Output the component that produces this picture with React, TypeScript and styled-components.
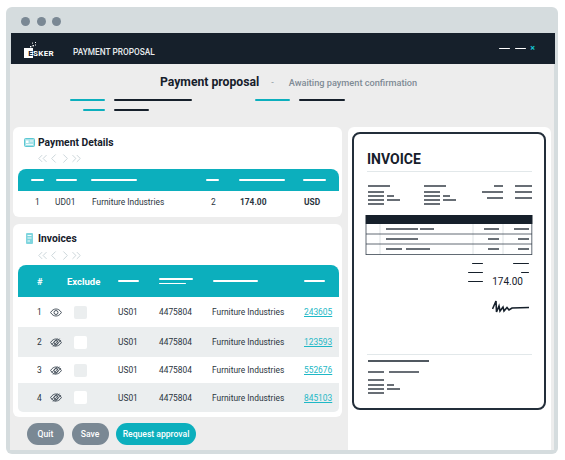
import React from 'react'
import styled, { createGlobalStyle } from 'styled-components'
import { ChevronLeft, ChevronRight, ChevronsLeft, ChevronsRight } from 'lucide-react'

const GlobalStyle = createGlobalStyle`
  html, body {
    margin: 0;
    padding: 0;
    background: #fff;
  }
  * {
    box-sizing: border-box;
  }
`

const DARK = '#16202b'
const CYAN = '#0cafbd'

const Page = styled.div`
  width: 565px;
  height: 460px;
  padding: 7px 0 0 6px;
  font-family: Roboto, 'Liberation Sans', sans-serif;
  color: ${DARK};
  overflow: hidden;
`

const Window = styled.div`
  width: 552px;
  height: 447px;
  display: flex;
  flex-direction: column;
  padding: 0 4px 4px;
  background: #d5dcde;
  border-radius: 6px;
`

const TitleBar = styled.div`
  height: 26px;
  flex: none;
  display: flex;
  align-items: center;
  gap: 6.5px;
  padding: 2px 0 0 11px;
`

const Dot = styled.span`
  width: 9px;
  height: 9px;
  border-radius: 50%;
  background: #7a8894;
`

const AppHeader = styled.header`
  height: 31px;
  flex: none;
  margin: 0 -1px 0 1px;
  display: flex;
  align-items: center;
  background: ${DARK};
  color: #e8ecee;
  padding: 0 20px 0 13px;
`

const Logo = styled.div`
  position: relative;
  display: flex;
  align-items: flex-end;
  width: 31px;
  height: 10px;
  margin-top: 8px;
  font-size: 8px;
  line-height: 8px;
  letter-spacing: 0.35px;
  font-weight: 700;
  color: #fff;
`

const LogoBlock = styled.span`
  width: 9px;
  height: 10px;
  background: #fff;
  color: ${DARK};
  text-align: right;
  padding-top: 2px;
`

const LogoDots = styled.svg`
  position: absolute;
  left: 5px;
  top: -6px;
`

const AppName = styled.span`
  margin-left: 18px;
  margin-top: 6px;
  font-size: 8.3px;
  font-weight: 500;
`

const WindowControls = styled.div`
  margin-left: auto;
  margin-top: 0;
  display: flex;
  align-items: center;
  gap: 5px;
`

const CloseMark = styled.span`
  color: #14c2d0;
  font-size: 9px;
  line-height: 7px;
  font-weight: 700;
  margin-left: -1px;
`

const Bar = styled.span<{ $w: number; $color?: string; $h?: number }>`
  display: block;
  flex: none;
  width: ${(p) => p.$w}px;
  height: ${(p) => p.$h ?? 1.5}px;
  background: ${(p) => p.$color ?? DARK};
  border-radius: 1px;
`

const Main = styled.main`
  flex: 1;
  min-height: 0;
  display: flex;
  flex-direction: column;
  background: #ededed;
  padding: 0 3px;
`

const Heading = styled.div`
  display: flex;
  align-items: center;
  height: 18px;
  margin-top: 9px;
  padding-left: 147px;
`

const HeadingTitle = styled.h1`
  margin: 0;
  font-size: 12.2px;
  font-weight: 700;
  white-space: nowrap;
`

const HeadingDash = styled.span`
  margin-left: 12px;
  font-size: 9px;
  color: #8b97a1;
`

const HeadingStatus = styled.span`
  margin-left: 15px;
  font-size: 9.2px;
  font-weight: 500;
  color: #7f8b95;
  white-space: nowrap;
`

const StepBars = styled.div`
  display: flex;
  margin-top: 8px;
  padding-left: 57px;
  gap: 63px;
`

const StepGroup = styled.div`
  display: flex;
  flex-direction: column;
  gap: 8.5px;
`

const StepRow = styled.div<{ $indent?: number }>`
  display: flex;
  gap: 9px;
  margin-left: ${(p) => p.$indent ?? 0}px;
`

const Columns = styled.div`
  display: grid;
  grid-template-columns: 329px 203px;
  column-gap: 6px;
  margin-top: 16.5px;
  flex: 1;
  min-height: 0;
`

const LeftColumn = styled.div`
  display: flex;
  flex-direction: column;
  gap: 7px;
`

const Card = styled.section<{ $top: number }>`
  background: #fff;
  border-radius: 6px;
  padding: ${(p) => p.$top}px 3px 5px 5px;
`

const CardTitle = styled.h2`
  margin: 0;
  height: 14px;
  display: flex;
  align-items: center;
  gap: 3px;
  font-size: 10.3px;
  font-weight: 700;
  white-space: nowrap;
`

const TitleIcon = styled.svg<{ $left: number }>`
  margin-left: ${(p) => p.$left}px;
`

const InvoicesLabel = styled.span`
  margin-left: 2px;
`

const Pager = styled.div<{ $top: number; $bottom: number }>`
  display: flex;
  align-items: center;
  height: 12px;
  gap: 0;
  margin: ${(p) => p.$top}px 0 ${(p) => p.$bottom}px 16.5px;
  color: #c9d3d7;

  & > svg {
    flex: none;
    margin-right: -3.5px;
  }
`

const Row = styled.div<{
  $cols: string
  $h: number
  $striped?: boolean
  $head?: boolean
  $last?: boolean
}>`
  display: grid;
  grid-template-columns: ${(p) => p.$cols};
  align-items: center;
  height: ${(p) => p.$h}px;
  font-size: 8.4px;
  background: ${(p) => (p.$head ? CYAN : p.$striped ? '#ebeeef' : '#fff')};
  color: ${(p) => (p.$head ? '#fff' : '#2a3540')};
  border-radius: ${(p) => (p.$head ? '8px 8px 0 0' : p.$last ? '0 0 5px 5px' : '0')};
`

const Cell = styled.div<{ $bold?: boolean; $center?: boolean; $indent?: number }>`
  font-weight: ${(p) => (p.$bold ? 700 : 400)};
  text-align: ${(p) => (p.$center ? 'center' : 'left')};
  margin-left: ${(p) => p.$indent ?? 0}px;
  white-space: nowrap;
`

const HeadLabel = styled.div<{ $indent?: number; $span?: number }>`
  font-size: 9.5px;
  font-weight: 700;
  margin-left: ${(p) => p.$indent ?? 0}px;
  grid-column: span ${(p) => p.$span ?? 1};
  white-space: nowrap;
`

const HeadBar = styled(Bar)<{ $indent?: number }>`
  background: #fff;
  height: 1.5px;
  margin-left: ${(p) => p.$indent ?? 0}px;
`

const StackedBars = styled.div`
  display: flex;
  flex-direction: column;
  gap: 3px;
`

const Check = styled.span<{ $striped?: boolean }>`
  display: block;
  width: 13px;
  height: 13px;
  border-radius: 2px;
  background: ${(p) => (p.$striped ? '#fff' : '#ebeeef')};
`

const InvoiceLink = styled.a`
  color: #1eb8c6;
  text-decoration: underline;
`

const Actions = styled.div`
  display: flex;
  gap: 7.5px;
  margin-top: -1px;
  padding-left: 14px;
`

const ActionButton = styled.button<{ $primary?: boolean; $w: number }>`
  width: ${(p) => p.$w}px;
  height: 22px;
  padding: 0;
  border: 0;
  border-radius: 11px;
  font-family: inherit;
  font-size: 8.6px;
  font-weight: 500;
  color: #fff;
  background: ${(p) => (p.$primary ? CYAN : '#7a8894')};
`

const PreviewPanel = styled.aside`
  background: #fff;
  border-radius: 6px 6px 0 0;
  padding: 5px 5px 0 4px;
  height: 323px;
`

const Paper = styled.div`
  width: 194px;
  height: 278px;
  display: flex;
  flex-direction: column;
  border: 2px solid #232e3a;
  border-radius: 8px;
  padding: 16px 12px 14px 13px;
`

const PaperTitle = styled.h3`
  margin: 0;
  height: 18px;
  line-height: 18px;
  font-size: 14px;
  font-weight: 700;
`

const PaperRule = styled.hr`
  width: 165px;
  flex: none;
  height: 1px;
  margin: 2.5px 0 0;
  border: 0;
  background: #e2e8ea;
`

const PaperLines = styled.svg`
  display: block;
  flex: none;
  margin-left: -2px;
`

const TotalRow = styled.div`
  display: grid;
  grid-template-columns: 116px 46px;
  height: 9.3px;
  align-items: center;
  justify-items: end;
`

const TotalsBlock = styled.div`
  margin-top: 3px;
`

const TotalValue = styled.span`
  font-size: 10px;
  line-height: 9px;
  margin-right: 6px;
`

const Signature = styled.svg`
  display: block;
  align-self: flex-end;
  margin: 14px 3px 0 0;
`

const PaperFooter = styled.div`
  margin-top: auto;
`

type LineSpec = [number, number, number]

// x1, x2, y in page pixels, shifted by the svg viewBox
const topLines: LineSpec[] = [
  [368, 390, 186], [368, 384, 192], [368, 384, 196], [387, 394, 196], [368, 384, 200], [387, 400, 200], [368, 384, 204],
  [424, 446, 186], [424, 440, 192], [424, 440, 196], [443, 450, 196], [424, 440, 200], [443, 456, 200], [424, 440, 204],
  [494, 503, 186], [482, 503, 192], [487, 503, 198],
  [515, 532, 186], [515, 532, 192], [515, 532, 198],
  [386, 418, 229], [420, 434, 229], [484, 499, 229], [514, 529, 229],
  [386, 418, 239], [488, 499, 239], [518, 529, 239],
  [386, 402, 249], [406, 430, 249], [488, 499, 249], [518, 529, 249],
]

const footerLines: LineSpec[] = [
  [368, 429, 362], [368, 384, 373], [389, 419, 373], [368, 384, 381],
  [368, 384, 386], [387, 394, 386], [368, 384, 390], [387, 400, 390], [368, 384, 394],
]

const drawLines = (lines: LineSpec[]) =>
  lines.map(([x1, x2, y]) => (
    <line key={`${x1}-${x2}-${y}`} x1={x1} x2={x2} y1={y} y2={y} stroke={DARK} strokeWidth="1.3" />
  ))

const EyeIcon = ({ off }: { off?: boolean }) => (
  <svg width="12" height="9" viewBox="0 0 12 9" fill="none" stroke="#3a4550" strokeWidth="0.9">
    <path d="M0.6 4.5C2.2 1.9 4 1 6 1s3.8 0.9 5.4 3.5C9.8 7.1 8 8 6 8S2.2 7.1 0.6 4.5Z" />
    <circle cx="6" cy="4.5" r="2" />
    {off && <path d="M3 8.6L9.6 0.6M5 8.6L11 2M1.6 6.6L7.6 0.6" strokeWidth="0.8" />}
  </svg>
)

const Pagination = ({ top, bottom }: { top: number; bottom: number }) => (
  <Pager $top={top} $bottom={bottom}>
    <ChevronsLeft size={15} strokeWidth={1.5} />
    <ChevronLeft size={15} strokeWidth={1.5} />
    <ChevronRight size={15} strokeWidth={1.5} />
    <ChevronsRight size={15} strokeWidth={1.5} />
  </Pager>
)

const detailCols = '38px 35px 115px 33px 64px 36px'
const invoiceCols = '32px 24px 44px 41px 53px 92px 35px'

const invoices = [
  { id: 1, link: '243605', h: 30 },
  { id: 2, link: '123593', h: 30 },
  { id: 3, link: '552676', h: 26 },
  { id: 4, link: '845103', h: 29 },
]

const App = () => {
  return (
    <Page>
      <GlobalStyle />
      <Window>
        <TitleBar>
          <Dot />
          <Dot />
          <Dot />
        </TitleBar>
        <AppHeader>
          <Logo>
            <LogoDots width="8" height="6" viewBox="0 0 8 6" fill="#fff">
              <rect x="1" y="4" width="1.4" height="1.4" />
              <rect x="3.5" y="3" width="1.4" height="1.4" />
              <rect x="3" y="0.6" width="1" height="1" />
              <rect x="6" y="0" width="1" height="1" />
              <rect x="6" y="2.5" width="1" height="1" />
            </LogoDots>
            <LogoBlock>E</LogoBlock>
            SKER
          </Logo>
          <AppName>PAYMENT PROPOSAL</AppName>
          <WindowControls>
            <Bar $w={11} $color="#fff" $h={1} />
            <Bar $w={11} $color="#fff" $h={1} />
            <CloseMark>×</CloseMark>
          </WindowControls>
        </AppHeader>
        <Main>
          <Heading>
            <HeadingTitle>Payment proposal</HeadingTitle>
            <HeadingDash>-</HeadingDash>
            <HeadingStatus>Awaiting payment confirmation</HeadingStatus>
          </Heading>
          <StepBars>
            <StepGroup>
              <StepRow>
                <Bar $w={35} $color={CYAN} />
                <Bar $w={78} />
              </StepRow>
              <StepRow $indent={13}>
                <Bar $w={22} $color={CYAN} />
                <Bar $w={35} />
              </StepRow>
            </StepGroup>
            <StepGroup>
              <StepRow>
                <Bar $w={35} $color={CYAN} />
                <Bar $w={46} />
              </StepRow>
            </StepGroup>
          </StepBars>
          <Columns>
            <LeftColumn>
              <Card $top={8}>
                <CardTitle>
                  <TitleIcon $left={6} width="11" height="9" viewBox="0 0 11 9">
                    <rect x="0.5" y="0.5" width="10" height="8" rx="1" fill="#a8e2e8" stroke="#5cc8d3" />
                    <rect x="2" y="2.5" width="2.5" height="2.5" fill="#fff" />
                    <path d="M6 3h3M2 6.5h7" stroke="#fff" strokeWidth="0.8" />
                  </TitleIcon>
                  Payment Details
                </CardTitle>
                <Pagination top={3} bottom={5} />
                <Row $cols={detailCols} $h={22} $head>
                  <HeadBar $w={13} $indent={13} />
                  <HeadBar $w={21} />
                  <HeadBar $w={46} />
                  <HeadBar $w={13} />
                  <HeadBar $w={46} />
                  <HeadBar $w={23} />
                </Row>
                <Row $cols={detailCols} $h={21}>
                  <Cell $indent={17}>1</Cell>
                  <Cell $indent={-1}>UD01</Cell>
                  <Cell $indent={1}>Furniture Industries</Cell>
                  <Cell $indent={5}>2</Cell>
                  <Cell $bold $indent={1}>174.00</Cell>
                  <Cell $bold $indent={1}>USD</Cell>
                </Row>
              </Card>
              <Card $top={7}>
                <CardTitle>
                  <TitleIcon $left={8} width="7" height="11" viewBox="0 0 7 11">
                    <rect x="0" y="0" width="7" height="11" rx="1" fill="#7fd5de" />
                    <path d="M1.5 2.5h4M1.5 5h4M1.5 8h2.5" stroke="#fff" strokeWidth="0.9" />
                  </TitleIcon>
                  <InvoicesLabel>Invoices</InvoicesLabel>
                </CardTitle>
                <Pagination top={4} bottom={4} />
                <Row $cols={invoiceCols} $h={32} $head>
                  <HeadLabel $indent={19}>#</HeadLabel>
                  <HeadLabel $indent={17} $span={2}>Exclude</HeadLabel>
                  <HeadBar $w={21} />
                  <StackedBars>
                    <HeadBar $w={34} />
                    <HeadBar $w={27} />
                  </StackedBars>
                  <HeadBar $w={45} $indent={1} />
                  <HeadBar $w={21} />
                </Row>
                {invoices.map((inv) => {
                  const striped = inv.id % 2 === 0
                  return (
                    <Row key={inv.id} $cols={invoiceCols} $h={inv.h} $striped={striped} $last={inv.id === 4}>
                      <Cell $indent={19}>{inv.id}</Cell>
                      <EyeIcon off={inv.id > 1} />
                      <Check $striped={striped} />
                      <Cell>US01</Cell>
                      <Cell>4475804</Cell>
                      <Cell>Furniture Industries</Cell>
                      <Cell>
                        <InvoiceLink href="#">{inv.link}</InvoiceLink>
                      </Cell>
                    </Row>
                  )
                })}
              </Card>
              <Actions>
                <ActionButton $w={37}>Quit</ActionButton>
                <ActionButton $w={37}>Save</ActionButton>
                <ActionButton $w={80} $primary>Request approval</ActionButton>
              </Actions>
            </LeftColumn>
            <PreviewPanel>
              <Paper>
                <PaperTitle>INVOICE</PaperTitle>
                <PaperRule />
                <PaperLines width="169" height="84" viewBox="365 172 169 84">
                  {drawLines(topLines)}
                  <rect x="365.5" y="215" width="167" height="9" fill={DARK} />
                  <path d="M380 224V254.5M473 224V254.5M503 224V254.5" stroke="#d5dcde" strokeWidth="0.8" />
                  <path
                    d="M366 224V255M531.8 224V255M366 234H532M366 244H532M366 254.5H532"
                    stroke="#3a4550"
                    strokeWidth="0.8"
                    fill="none"
                  />
                </PaperLines>
                <TotalsBlock>
                  <TotalRow>
                    <Bar $w={11} $h={1.3} />
                    <Bar $w={16} $h={1.3} />
                  </TotalRow>
                  <TotalRow>
                    <Bar $w={15} $h={1.3} />
                    <Bar $w={8} $h={1.3} />
                  </TotalRow>
                  <TotalRow>
                    <Bar $w={15} $h={1.3} />
                    <TotalValue>174.00</TotalValue>
                  </TotalRow>
                </TotalsBlock>
                <Signature width="37" height="13" viewBox="0 0 37 13" fill="none" stroke={DARK} strokeWidth="1.6">
                  <path d="M0.5 9L4 1L4.5 12L7 6L8 11L11 7L12 11L15 7.5L17 10L20 8L37 7.5" />
                </Signature>
                <PaperFooter>
                  <PaperRule />
                  <PaperLines width="169" height="39" viewBox="365 356 169 39">
                    {drawLines(footerLines)}
                  </PaperLines>
                </PaperFooter>
              </Paper>
            </PreviewPanel>
          </Columns>
        </Main>
      </Window>
    </Page>
  )
}

export default App
